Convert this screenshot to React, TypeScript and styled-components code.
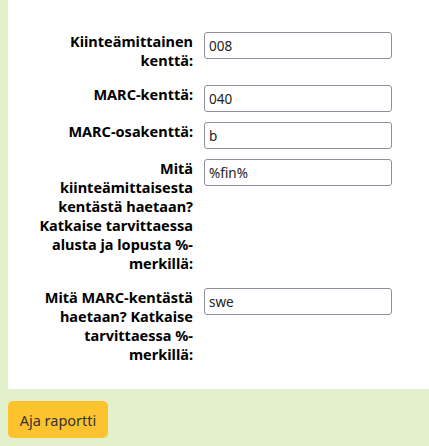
import React from "react";
import styled, { createGlobalStyle } from "styled-components";

const Global = createGlobalStyle`
  html, body { margin: 0; padding: 0; background: #e2f0cb; }
  body { font-family: "Noto Sans", sans-serif; }
`;

const Page = styled.div`
  padding: 0 0 10px 8px;
`;

const Panel = styled.div`
  background: #ffffff;
  padding: 32px 0 20px 0;
`;

const Form = styled.div`
  display: grid;
  grid-template-columns: 185px 188px;
  column-gap: 11px;
  row-gap: 10px;
  align-items: start;
`;

const Label = styled.label`
  font-family: "Noto Sans", sans-serif;
  font-weight: bold;
  font-size: 14.5px;
  line-height: 19px;
  color: #000;
  text-align: right;
  padding: 0 0 5px 27px;
`;

const Input = styled.input`
  box-sizing: border-box;
  width: 188px;
  height: 27px;
  margin: 0;
  padding: 0 4px;
  border: 1px solid #8f8f9d;
  border-radius: 3px;
  background: #fff;
  font-family: "Noto Sans", sans-serif;
  font-size: 13.5px;
  color: #222;
  outline: none;
`;

const Button = styled.button`
  margin-top: 12px;
  width: 100px;
  height: 37px;
  padding: 0;
  border: none;
  border-radius: 5px;
  background: #fdc32f;
  color: #333;
  font-family: "Noto Sans", sans-serif;
  font-size: 14.5px;
  cursor: pointer;
`;

const fields = [
  { label: "Kiinteämittainen kenttä:", value: "008" },
  { label: "MARC-kenttä:", value: "040" },
  { label: "MARC-osakenttä:", value: "b" },
  {
    label:
      "Mitä kiinteämittaisesta kentästä haetaan? Katkaise tarvittaessa alusta ja lopusta %-merkillä:",
    value: "%fin%",
  },
  {
    label: "Mitä MARC-kentästä haetaan? Katkaise tarvittaessa %-merkillä:",
    value: "swe",
  },
];

export default function App() {
  return (
    <>
      <Global />
      <Page>
        <Panel>
          <Form>
            {fields.map((f, i) => (
              <React.Fragment key={i}>
                <Label htmlFor={`f${i}`}>{f.label}</Label>
                <Input id={`f${i}`} defaultValue={f.value} />
              </React.Fragment>
            ))}
          </Form>
        </Panel>
        <Button>Aja raportti</Button>
      </Page>
    </>
  );
}
